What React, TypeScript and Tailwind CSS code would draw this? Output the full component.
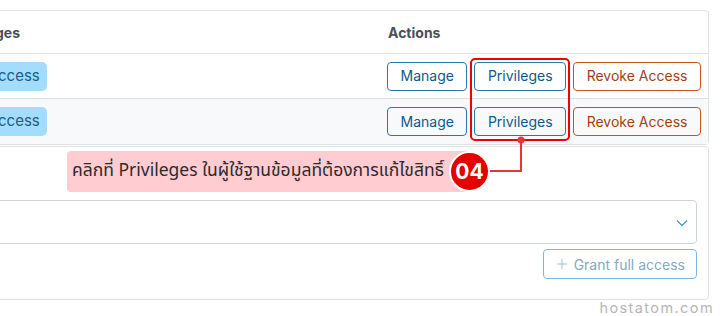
import { Plus } from 'lucide-react'

const rows = [{ id: 1 }, { id: 2 }]

function OutlineButton({ label, tone }: { label: string; tone: 'blue' | 'orange' }) {
  const cls =
    tone === 'blue'
      ? 'border-[#2677ae] text-[#0e5a8a]'
      : 'border-[#c9531f] text-[#a4420f]'
  return (
    <button className={`h-[29px] rounded-[4px] border bg-transparent px-[12.5px] text-[14px] leading-none ${cls}`}>
      {label}
    </button>
  )
}

export default function App() {
  return (
    <div className="relative h-[316px] w-[720px] overflow-hidden bg-white font-['Inter',sans-serif]">
      <div className="pr-[11px] pt-[10px]">
        {/* table card */}
        <div className="-ml-[61px] rounded-[4px] border border-[#dee2e6]">
          <div className="grid h-[43px] grid-cols-[437px_1fr] items-center border-b border-[#dee2e6] text-[14px] font-bold text-[#4b4f56]">
            <div className="px-3">Privileges</div>
            <div className="pl-[11px]">Actions</div>
          </div>
          {rows.map((r, i) => (
            <div
              key={r.id}
              className={`grid h-[45px] grid-cols-[437px_1fr] items-center ${i === 0 ? 'border-b border-[#dee2e6]' : 'bg-[#f8f9fa]'}`}
            >
              <div className="px-3">
                <span className="inline-flex h-[29px] items-center rounded-[5px] bg-[#a3dcfc] px-[7px] text-[15px] text-[#1c5d84]">
                  Full Access
                </span>
              </div>
              <div className="flex gap-[7px] pl-[10px]">
                <OutlineButton label="Manage" tone="blue" />
                <OutlineButton label="Privileges" tone="blue" />
                <OutlineButton label="Revoke Access" tone="orange" />
              </div>
            </div>
          ))}
        </div>

        {/* grant card */}
        <div className="-ml-[61px] mt-px h-[154px] rounded-[4px] border border-[#dee2e6] pl-3 pr-[11px] pt-[53px]">
          <div className="flex h-[44px] items-center justify-end rounded-[4px] border border-[#ced4da] pr-[8px]">
            <svg width="12" height="8" viewBox="0 0 12 8" className="mt-[1px]">
              <polyline points="1,1.5 6,6.5 11,1.5" fill="none" stroke="#4f98c8" strokeWidth="1.3" />
            </svg>
          </div>
          <div className="mt-[5px] flex justify-end">
            <button className="flex h-[30px] items-center gap-[4px] rounded-[4px] border border-[#7ab8d9] pl-[10px] pr-[11px] text-[14px] text-[#86aac2]">
              <Plus className="h-[16px] w-[16px]" strokeWidth={1.1} />
              Grant full access
            </button>
          </div>
        </div>
        <div className="-mr-[5px] text-right text-[14.5px] leading-[15px] tracking-[1.4px] text-[#b5b5b5]">hostatom.com</div>
      </div>

      {/* annotation overlay */}
      <div className="absolute left-[470px] top-[58px] h-[83px] w-[100px] rounded-[5px] border-2 border-[#f00000]" />
      <svg className="absolute left-0 top-0" width="720" height="316">
        <path d="M521 140 V171 H488" fill="none" stroke="#e8343a" strokeWidth="2" />
        <circle cx="521" cy="140" r="3.5" fill="#e8343a" />
      </svg>
      <div className="absolute left-[67px] top-[151px] flex h-[41px] w-[404px] items-center rounded-[4px] bg-[#ffccd2] pl-[5px] font-['Noto_Sans_Thai','Noto_Sans',sans-serif] text-[17.5px] text-[#2b2b2b]">
        คลิกที่ Privileges ในผู้ใช้ฐานข้อมูลที่ต้องการแก้ไขสิทธิ์
      </div>
      <div className="absolute left-[449px] top-[151px] flex h-[41px] w-[41px] items-center justify-center rounded-full border-2 border-white bg-[#e60000] text-[21px] font-bold text-white">
        04
      </div>
    </div>
  )
}
